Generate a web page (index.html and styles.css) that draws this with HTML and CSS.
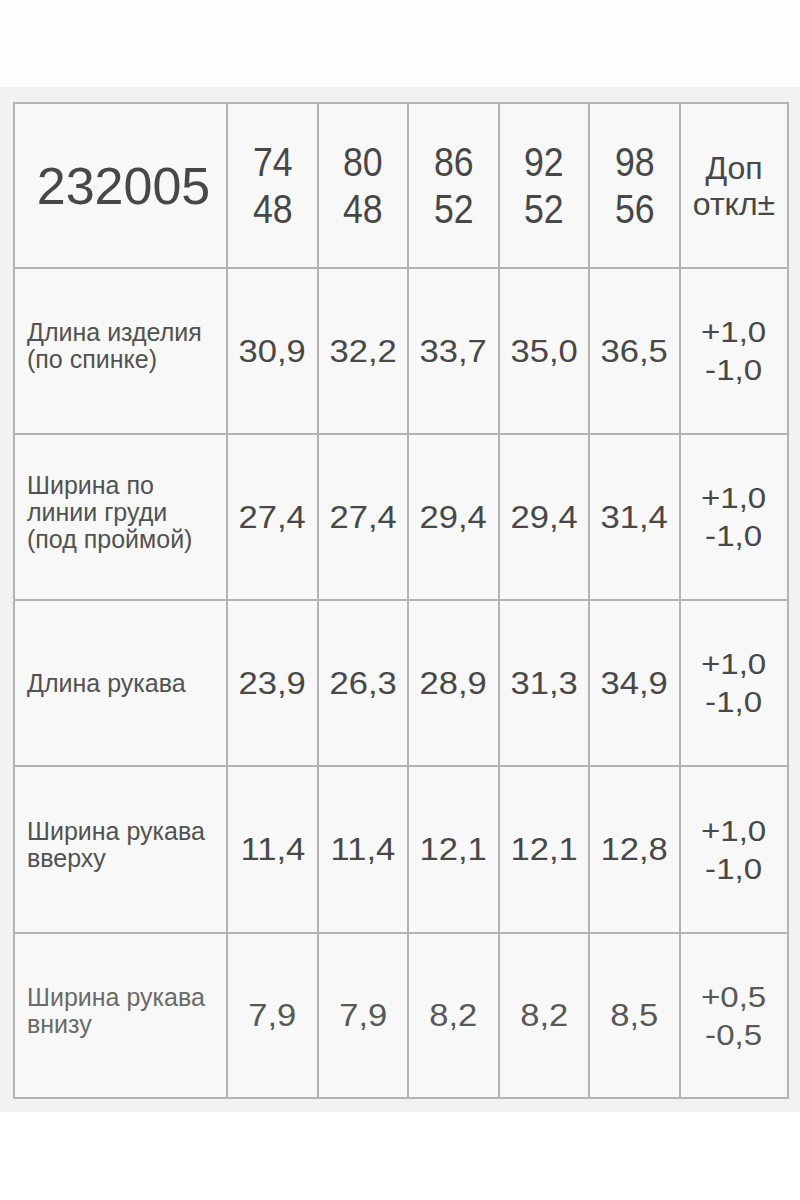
FILE: index.html
```html
<!DOCTYPE html>
<html lang="ru">
<head>
<meta charset="utf-8">
<title>232005</title>
<link rel="stylesheet" href="styles.css">
</head>
<body>
<div class="top"></div>
<div class="panel">
  <div class="grid">
    <div class="cell code">232005</div>
    <div class="cell size"><span class="narrow">74<br>48</span></div>
    <div class="cell size"><span class="narrow">80<br>48</span></div>
    <div class="cell size"><span class="narrow">86<br>52</span></div>
    <div class="cell size"><span class="narrow">92<br>52</span></div>
    <div class="cell size"><span class="narrow">98<br>56</span></div>
    <div class="cell dop">Доп<br>откл±</div>

    <div class="cell label multi">Длина изделия<br>(по спинке)</div>
    <div class="cell num"><span class="wide">30,9</span></div>
    <div class="cell num"><span class="wide">32,2</span></div>
    <div class="cell num"><span class="wide">33,7</span></div>
    <div class="cell num"><span class="wide">35,0</span></div>
    <div class="cell num"><span class="wide">36,5</span></div>
    <div class="cell tol"><span class="wider">+1,0<br>-1,0</span></div>

    <div class="cell label multi">Ширина по<br>линии груди<br>(под проймой)</div>
    <div class="cell num"><span class="wide">27,4</span></div>
    <div class="cell num"><span class="wide">27,4</span></div>
    <div class="cell num"><span class="wide">29,4</span></div>
    <div class="cell num"><span class="wide">29,4</span></div>
    <div class="cell num"><span class="wide">31,4</span></div>
    <div class="cell tol"><span class="wider">+1,0<br>-1,0</span></div>

    <div class="cell label">Длина рукава</div>
    <div class="cell num"><span class="wide">23,9</span></div>
    <div class="cell num"><span class="wide">26,3</span></div>
    <div class="cell num"><span class="wide">28,9</span></div>
    <div class="cell num"><span class="wide">31,3</span></div>
    <div class="cell num"><span class="wide">34,9</span></div>
    <div class="cell tol"><span class="wider">+1,0<br>-1,0</span></div>

    <div class="cell label multi">Ширина рукава<br>вверху</div>
    <div class="cell num"><span class="wide">11,4</span></div>
    <div class="cell num"><span class="wide">11,4</span></div>
    <div class="cell num"><span class="wide">12,1</span></div>
    <div class="cell num"><span class="wide">12,1</span></div>
    <div class="cell num"><span class="wide">12,8</span></div>
    <div class="cell tol"><span class="wider">+1,0<br>-1,0</span></div>

    <div class="cell label multi light">Ширина рукава<br>внизу</div>
    <div class="cell num light"><span class="wide">7,9</span></div>
    <div class="cell num light"><span class="wide">7,9</span></div>
    <div class="cell num light"><span class="wide">8,2</span></div>
    <div class="cell num light"><span class="wide">8,2</span></div>
    <div class="cell num light"><span class="wide">8,5</span></div>
    <div class="cell tol light"><span class="wider">+0,5<br>-0,5</span></div>
  </div>
</div>
</body>
</html>
```

FILE: styles.css
```css
html, body {
  margin: 0;
  padding: 0;
  background: #ffffff;
}

body {
  font-family: "Liberation Sans", Arial, sans-serif;
  color: #454545;
}

.top {
  height: 87px;
  background: #fdfdfd;
}

.panel {
  background: #f2f2f2;
  padding: 15px 11px 13px 13px;
}

.grid {
  display: grid;
  grid-template-columns: 213px 91px 90px 91px 90px 91px 108px;
  grid-template-rows: 165px 166px 166px 166px 167px 165px;
  border-left: 2px solid #b3b3b3;
  border-top: 2px solid #b3b3b3;
  width: max-content;
}

.cell {
  background: #f8f8f8;
  border-right: 2px solid #b3b3b3;
  border-bottom: 2px solid #b3b3b3;
  display: flex;
  align-items: center;
  justify-content: center;
  text-align: center;
}

.code {
  font-size: 52px;
  color: #474747;
  padding-left: 6px;
}

.size {
  font-size: 41px;
  line-height: 47px;
  color: #474747;
}

.narrow {
  display: inline-block;
  transform: scaleX(0.87);
}

.dop {
  font-size: 32px;
  line-height: 36px;
  color: #474747;
}

.label {
  justify-content: flex-start;
  text-align: left;
  padding-left: 12px;
  font-size: 25px;
  line-height: 27px;
  color: #525252;
}

.label.multi {
  padding-bottom: 10px;
}

.num {
  font-size: 32px;
  color: #484848;
}

.wide {
  display: inline-block;
  transform: scaleX(1.08);
}

.tol {
  font-size: 29px;
  line-height: 38px;
  color: #484848;
}

.wider {
  display: inline-block;
  transform: scaleX(1.14);
}

.label.light {
  color: #6a6a6a;
}

.num.light,
.tol.light {
  color: #585858;
}
```
